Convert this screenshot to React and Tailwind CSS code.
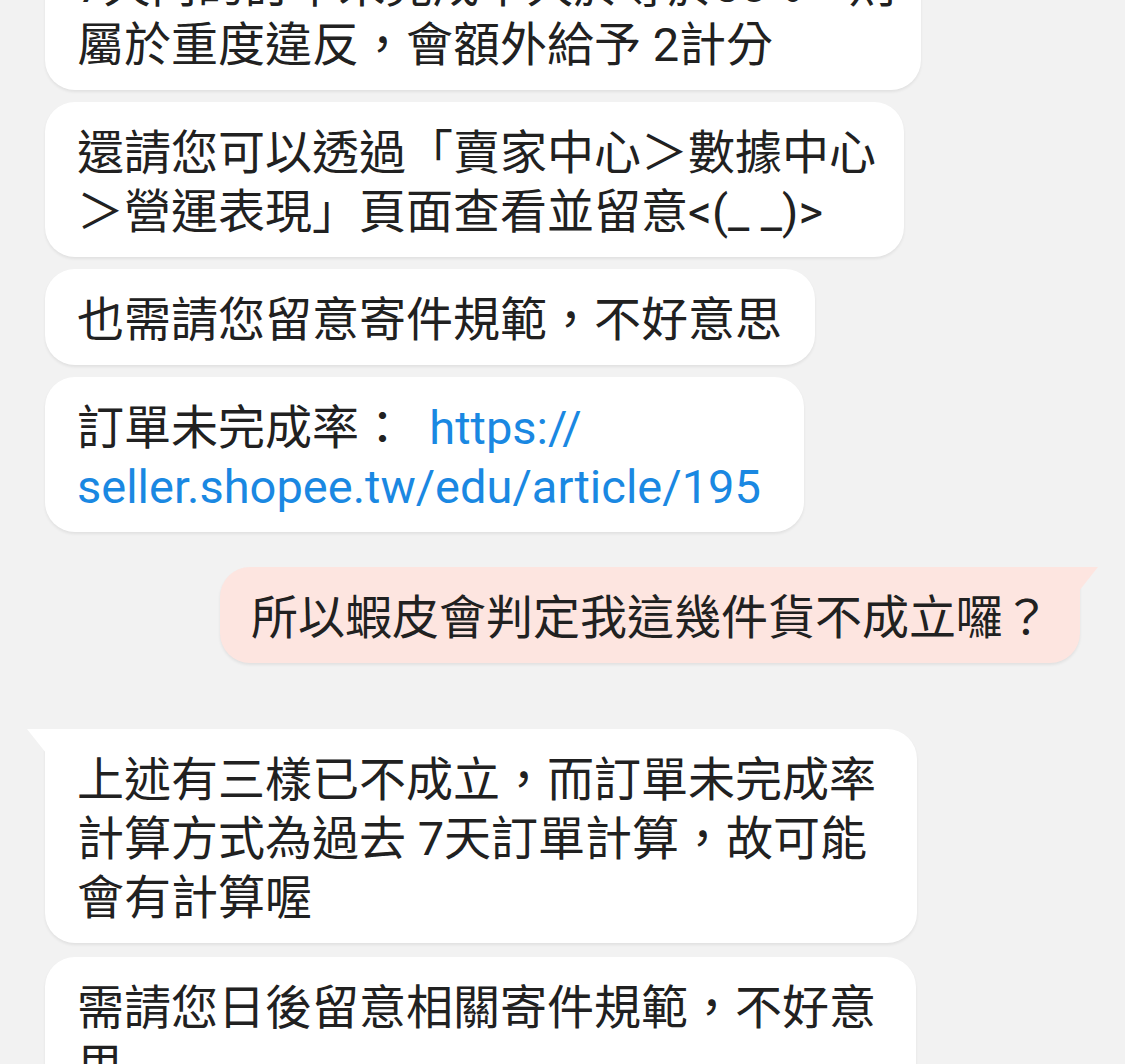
import React from 'react';

const FONT = { fontFamily: 'Roboto, "Noto Sans CJK TC", "Noto Sans", sans-serif' };

// Small triangle that joins a bubble to the sender's side
function Tail({ side, color }) {
    if (side === 'left') {
        return (
            <svg className="absolute top-0 -left-[18px]" width="19" height="24" viewBox="0 0 19 24">
                <polygon points="0,0 19,0 19,24" fill={color} />
            </svg>
        );
    }
    return (
        <svg className="absolute top-0 -right-[18px]" width="19" height="24" viewBox="0 0 19 24">
            <polygon points="0,0 19,0 0,24" fill={color} />
        </svg>
    );
}

function Bubble({ lines, mine = false, tail = false, className = '', children }) {
    const bg = mine ? 'bg-[#fde5e0]' : 'bg-white';
    const corner = tail ? (mine ? 'rounded-tr-none' : 'rounded-tl-none') : '';
    return (
        <div
            className={`relative w-fit whitespace-nowrap rounded-[30px] ${bg} ${corner} pl-8 pr-[33px] pt-[21px] pb-[16px] text-[47px] leading-[59px] text-[#212121] shadow-[0_2px_3px_rgba(0,0,0,0.07)] ${className}`}
        >
            {tail && <Tail side={mine ? 'right' : 'left'} color={mine ? '#fde5e0' : '#ffffff'} />}
            {children ||
                lines.map((line, i) => (
                    <React.Fragment key={i}>
                        {i > 0 && <br />}
                        {line}
                    </React.Fragment>
                ))}
        </div>
    );
}

export default function App() {
    return (
        <div className="h-[1064px] w-full overflow-hidden bg-[#f2f2f2]" style={FONT}>
            <div className="flex flex-col gap-3 -mt-[65px] pl-[45px] pr-[45px]">
                <Bubble className="!pr-[25px]" lines={['7天內的訂單未完成率大於等於30%，則', '屬於重度違反，會額外給予 2計分']} />
                <Bubble className="!pr-[28px]" lines={['還請您可以透過「賣家中心＞數據中心', '＞營運表現」頁面查看並留意<(_ _)>']} />
                <Bubble lines={['也需請您留意寄件規範，不好意思']} />
                <Bubble className="!pr-[43px]">
                    訂單未完成率：&nbsp;&nbsp;<span className="text-[#1a88e2]">https://</span>
                    <br />
                    <span className="text-[#1a88e2]">seller.shopee.tw/edu/article/195</span>
                </Bubble>

                <div className="flex justify-end mt-[23px]">
                    <Bubble mine tail className="!pr-[30px] !pl-[31px]" lines={['所以蝦皮會判定我這幾件貨不成立囉？']} />
                </div>

                <Bubble tail className="mt-[54px] !pr-[41px]" lines={['上述有三樣已不成立，而訂單未完成率', '計算方式為過去 7天訂單計算，故可能', '會有計算喔']} />
                <Bubble className="mt-[2px] !pr-[40px]" lines={['需請您日後留意相關寄件規範，不好意', '思']} />
            </div>
        </div>
    );
}
